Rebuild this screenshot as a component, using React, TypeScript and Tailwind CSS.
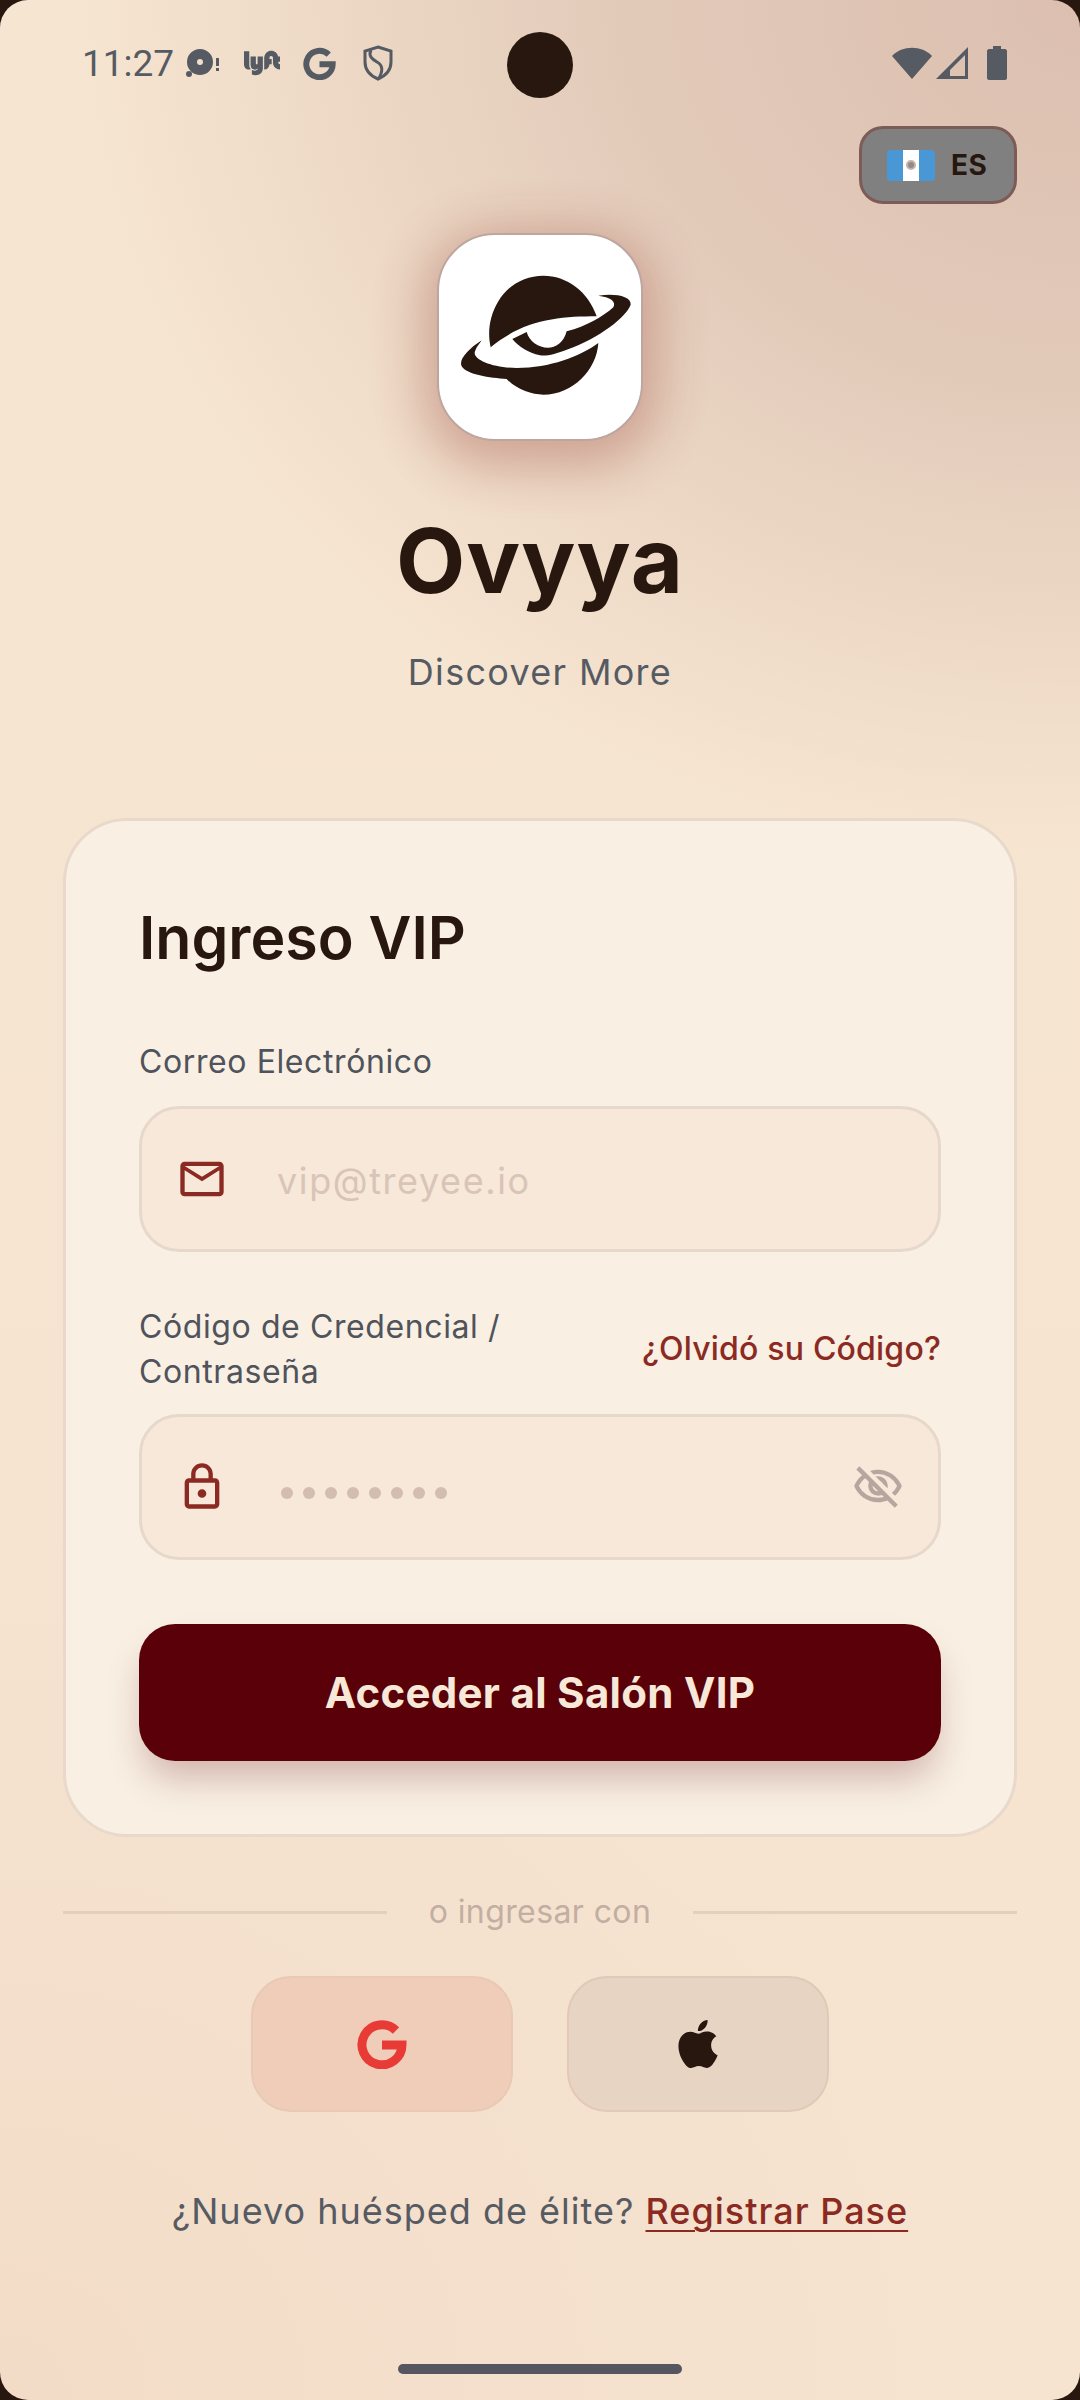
import React from 'react';
import { MdOutlineMailOutline, MdOutlineLock, MdOutlineVisibilityOff } from 'react-icons/md';
import { SiApple, SiLyft } from 'react-icons/si';

const Logo = () => (
  <svg viewBox="108 70 627 627" className="w-[209px] h-[209px] shrink-0" fill="#28170f">
    <path d="M272 413C262 370 268 320 295 275C325 225 375 198 430 198C500 198 565 245 590 320C480 320 370 330 272 413Z" />
    <path d="M595 258C640 250 695 258 692 285C680 320 600 385 500 420C470 432 440 440 420 437C385 430 355 410 337 388L380 367C395 420 480 440 500 365C560 350 610 320 640 293C650 275 630 262 595 258Z" />
    <path d="M245 392C205 418 175 450 185 470C200 495 270 505 320 508C350 540 395 555 430 555C520 555 590 480 595 400C540 440 450 475 350 475C280 475 215 450 225 425C230 410 240 400 245 392Z" />
  </svg>
);

const GoogleG = ({ className }: { className: string }) => (
  <svg viewBox="0 0 50 50" className={className} fill="none" stroke="currentColor" strokeWidth="9">
    <path d="M39 11.5A20 20 0 1 0 45 26H25" />
  </svg>
);

const StatusBar = () => (
  <div className="flex items-center justify-between h-[126px] pl-[82px] pr-[73px] text-[#565b63]">
    <div className="flex items-center">
      <span className="font-['Roboto',sans-serif] text-[37px] leading-none">11:27</span>
      <svg viewBox="0 0 34 30" className="w-[34px] h-[30px] ml-[12px]" fill="#565b63">
        <path fillRule="evenodd" d="M14 1a13 13 0 1 1 0 26a13 13 0 0 1 0-26Zm0 10a3 3 0 1 0 0 6a3 3 0 0 0 0-6Z" />
        <circle cx="3" cy="26" r="3" />
        <rect x="30" y="10" width="3" height="8" />
        <rect x="30" y="20" width="3" height="3" />
      </svg>
      <SiLyft className="ml-[24px] w-[36px] h-[36px]" />
      <GoogleG className="ml-[23px] w-[33px] h-[33px]" />
      <svg viewBox="0 0 30 36" className="w-[30px] h-[36px] ml-[27px]" fill="none" stroke="#565b63" strokeWidth="3">
        <path d="M15 2L28 6V17C28 26 22 31 15 34C8 31 2 26 2 17V6Z" />
        <path d="M8 5C5 11 9 14 14 17C20 20 20 26 16 33" />
      </svg>
    </div>
    <div className="flex items-center">
      <svg viewBox="0 0 40 34" className="w-[40px] h-[34px]" fill="#565b63">
        <path d="M0 10C10 -1 30 -1 40 10L20 33Z" />
      </svg>
      <svg viewBox="0 0 32 32" className="w-[32px] h-[32px] ml-[4px]" fill="#565b63">
        <path fillRule="evenodd" d="M32 0V32H0ZM29 8L14 23V29H29Z" />
      </svg>
      <svg viewBox="0 0 20 34" className="w-[20px] h-[34px] ml-[19px]" fill="#565b63">
        <path d="M6 0H14V3H18C19 3 20 4 20 5V32C20 33 19 34 18 34H2C1 34 0 33 0 32V5C0 4 1 3 2 3H6Z" />
      </svg>
    </div>
  </div>
);

const Field = ({ icon, children, right }: { icon: React.ReactNode; children: React.ReactNode; right?: React.ReactNode }) => (
  <div className="flex items-center h-[146px] rounded-[40px] border-[3px] border-[#e6d8cb] bg-[#f7e8d9] pl-[34px] pr-[34px]">
    <div className="w-[52px] flex justify-center text-[#8b2a22]">{icon}</div>
    <div className="flex-1 ml-[49px] mt-[4px]">{children}</div>
    {right}
  </div>
);

export default function App() {
  return (
    <div className="relative w-[1080px] h-[2400px] overflow-hidden bg-[#28170f] font-['Inter',sans-serif]">
      <div className="h-full rounded-[28px] overflow-hidden bg-[radial-gradient(ellipse_1000px_850px_at_100%_0%,#dcbfb0_0%,#e2cab9_45%,rgba(246,229,209,0)_100%),radial-gradient(ellipse_1000px_900px_at_0%_100%,#f2dcc8_0%,rgba(246,229,209,0)_100%),linear-gradient(180deg,#f6e5d1_0%,#f6e4d0_100%)]">
        <StatusBar />

        {/* Language pill */}
        <div className="flex justify-end pr-[63px]">
          <div className="flex items-center w-[158px] h-[78px] rounded-[24px] border-[3px] border-[#7d5c58] bg-[#808080] pl-[25px]">
            <div className="flex w-[48px] h-[31px] rounded-[4px] overflow-hidden">
              <div className="flex-1 bg-[#4a97d6]" />
              <div className="flex-1 bg-white flex items-center justify-center">
                <div className="w-[10px] h-[10px] rounded-full border-2 border-[#c9b2a0] bg-[#8d8a92]" />
              </div>
              <div className="flex-1 bg-[#4a97d6]" />
            </div>
            <span className="ml-[16px] text-[28px] font-bold text-[#28170f] leading-none tracking-[0.5px]">ES</span>
          </div>
        </div>

        {/* Brand */}
        <div className="flex flex-col items-center mt-[29px]">
          <div className="flex items-center justify-center w-[206px] h-[208px] rounded-[58px] bg-white border-2 border-[#bda69f] overflow-hidden shadow-[0_12px_50px_14px_rgba(139,42,34,0.3)]">
            <Logo />
          </div>
          <h1 className="mt-[70px] text-[90px] leading-[100px] font-bold text-[#28170f] tracking-[1px]">Ovyya</h1>
          <p className="mt-[39px] text-[36px] leading-[44px] text-[#565b63] tracking-[1.3px]">Discover More</p>
        </div>

        {/* Login card */}
        <div className="mx-[63px] mt-[124px] h-[1019px] rounded-[64px] border-[3px] border-[#e8d9cb] bg-[#f9efe3] px-[73px] pt-[83px]">
          <h2 className="text-[59px] leading-[68px] font-semibold text-[#28170f]">Ingreso VIP</h2>
          <label className="block mt-[70px] text-[32px] leading-[40px] text-[#4f535b] tracking-[0.6px]">Correo Electrónico</label>
          <div className="mt-[24px]">
            <Field icon={<MdOutlineMailOutline className="w-[54px] h-[54px]" />}>
              <span className="text-[36px] text-[#d9c4b8] tracking-[1.6px]">vip@treyee.io</span>
            </Field>
          </div>
          <div className="flex items-center justify-between mt-[52px]">
            <label className="w-[400px] text-[32px] leading-[45px] text-[#4f535b] tracking-[0.6px]">Código de Credencial / Contraseña</label>
            <a className="text-[32px] font-medium text-[#8b2a22] whitespace-nowrap tracking-[0.2px]">¿Olvidó su Código?</a>
          </div>
          <div className="mt-[20px]">
            <Field
              icon={<MdOutlineLock className="w-[54px] h-[54px]" />}
              right={<MdOutlineVisibilityOff className="w-[52px] h-[52px] text-[#b9a5a0]" />}
            >
              <div className="flex gap-[10px] ml-[4px] mt-[7px]">
                {Array.from({ length: 8 }).map((_, i) => (
                  <span key={i} className="w-[12px] h-[12px] rounded-full bg-[#d3bcb0]" />
                ))}
              </div>
            </Field>
          </div>
          <button className="w-full h-[137px] mt-[64px] rounded-[36px] bg-[#590009] text-[42px] font-bold text-[#f8e8d7] tracking-[0.3px] shadow-[0_22px_36px_-6px_rgba(89,0,9,0.25)]">
            Acceder al Salón VIP
          </button>
        </div>

        {/* Divider */}
        <div className="flex items-center mx-[63px] mt-[55px] h-[40px]">
          <div className="flex-1 h-[3px] bg-[#e2cfbe]" />
          <span className="mx-[42px] text-[32px] text-[#c3aea3] tracking-[0.4px]">o ingresar con</span>
          <div className="flex-1 h-[3px] bg-[#e2cfbe]" />
        </div>

        {/* Social */}
        <div className="flex justify-center gap-[54px] mt-[44px]">
          <div className="flex items-center justify-center w-[262px] h-[136px] rounded-[40px] border-2 border-[#e8c9b6] bg-[#f0cdb9]">
            <GoogleG className="w-[50px] h-[50px] text-[#e83b36]" />
          </div>
          <div className="flex items-center justify-center w-[262px] h-[136px] rounded-[40px] border-2 border-[#e2c8b6] bg-[#e8d4c2]">
            <SiApple className="w-[48px] h-[48px] text-[#28170f]" />
          </div>
        </div>

        <p className="mt-[75px] text-center text-[36px] leading-[48px] text-[#565b63] tracking-[1px]">
          ¿Nuevo huésped de élite? <a className="font-medium text-[#8b2a22] underline decoration-2 underline-offset-[6px]">Registrar Pase</a>
        </p>

        <div className="mx-auto mt-[129px] w-[284px] h-[10px] rounded-full bg-[#55565f]" />
      </div>

      {/* Camera cutout */}
      <div className="absolute left-[507px] top-[32px] w-[66px] h-[66px] rounded-full bg-[#28170f]" />
    </div>
  );
}
